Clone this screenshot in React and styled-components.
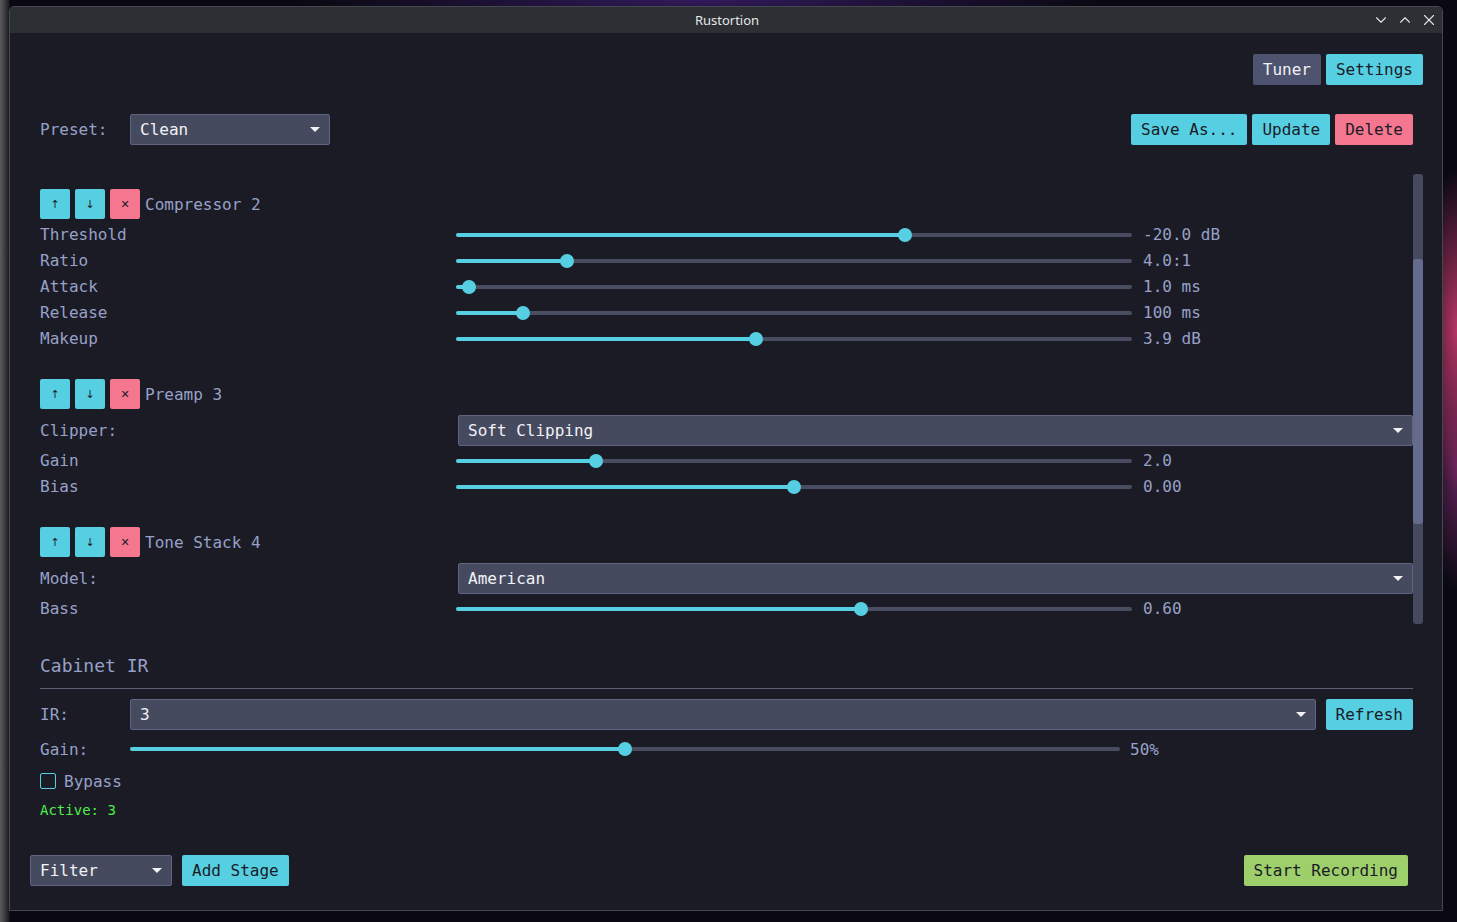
import React from 'react';
import styled, { createGlobalStyle } from 'styled-components';
import { ChevronDown, ChevronUp, X } from 'lucide-react';

const C = {
  bg: '#1b1b26',
  label: '#97a1c7',
  cyan: '#56cfe3',
  red: '#f5768f',
  green: '#9dd06b',
  slate: '#4e5470',
  track: '#494d62',
  pickBg: '#464a5f',
  pickBorder: '#5f6482',
  dark: '#1b1b26',
};

const Global = createGlobalStyle`
  html, body { margin: 0; padding: 0; width: 1457px; height: 922px; overflow: hidden; }
  body { background: #08070e; font-family: "DejaVu Sans Mono", "Liberation Mono", monospace; }
  * { box-sizing: border-box; }
`;

const Desktop = styled.div`
  width: 1457px;
  height: 922px;
  display: flex;
  padding: 6px 14px 11px 9px;
  background:
    radial-gradient(ellipse 40px 160px at 1457px 330px, rgba(214, 62, 118, 0.85), transparent 100%),
    radial-gradient(ellipse 30px 120px at 1457px 470px, rgba(150, 50, 130, 0.6), transparent 100%),
    radial-gradient(ellipse 400px 30px at 700px 0px, rgba(60, 30, 110, 0.8), transparent 100%),
    linear-gradient(90deg, #5d5d60 0px, #3b3b3f 5px, #1c1c20 9px, transparent 10px),
    #0a0912;
`;

const Window = styled.div`
  flex: 1;
  display: flex;
  flex-direction: column;
  background: ${C.bg};
  border: 1px solid #46484e;
  border-radius: 5px 5px 0 0;
  overflow: hidden;
`;

const TitleBar = styled.div`
  height: 26px;
  background: #2c2f34;
  display: grid;
  grid-template-columns: 1fr auto 1fr;
  align-items: center;
  font-family: "Noto Sans", "Open Sans", sans-serif;
  font-size: 13px;
  color: #e6e6e8;
`;

const TitleText = styled.div`
  grid-column: 2;
  padding-left: 2px;
`;

const WinControls = styled.div`
  grid-column: 3;
  justify-self: end;
  display: flex;
  gap: 6px;
  padding-right: 4px;
  color: #e2e2e2;
  svg { display: block; }
`;

const Body = styled.div`
  flex: 1;
  display: flex;
  flex-direction: column;
  padding: 21px 19px 24px 20px;
`;

const TopBar = styled.div`
  display: flex;
  justify-content: flex-end;
  gap: 5px;
`;

const Button = styled.button`
  height: 31px;
  padding: 0 10px;
  border: none;
  border-radius: 2px;
  font-family: "DejaVu Sans Mono", monospace;
  font-size: 16px;
  background: ${p => p.$bg || C.cyan};
  color: ${p => p.$fg || C.dark};
  display: flex;
  align-items: center;
  white-space: nowrap;
`;

const Main = styled.div`
  padding: 0 10px;
  display: flex;
  flex-direction: column;
`;

const PresetRow = styled.div`
  margin-top: 29px;
  display: flex;
  align-items: center;
  height: 31px;
`;

const Label = styled.div`
  width: ${p => p.$w || 'auto'};
  flex: none;
  color: ${C.label};
  font-size: 16px;
  white-space: nowrap;
`;

const Spacer = styled.div`
  flex: 1;
`;

const ButtonGroup = styled.div`
  display: flex;
  gap: 5px;
`;

const PickBox = styled.div`
  height: 31px;
  width: ${p => p.$w || 'auto'};
  flex: ${p => (p.$w ? 'none' : '1')};
  background: ${C.pickBg};
  border: 1px solid ${C.pickBorder};
  border-radius: 2px;
  padding: 0 9px;
  display: flex;
  align-items: center;
  justify-content: space-between;
  color: #f2f2f6;
  font-size: 16px;
`;

const Caret = styled.span`
  width: 0;
  height: 0;
  border-left: 5px solid transparent;
  border-right: 5px solid transparent;
  border-top: 5px solid #f2f2f6;
`;

const ScrollArea = styled.div`
  margin-top: 29px;
  margin-right: -10px;
  height: 450px;
  display: flex;
`;

const ScrollContent = styled.div`
  flex: 1;
  overflow: hidden;
  padding-top: 15px;
  display: flex;
  flex-direction: column;
  gap: 28px;
`;

const ScrollTrack = styled.div`
  width: 10px;
  flex: none;
  background: #454a5e;
  border-radius: 3px;
  padding-top: 85px;
`;

const ScrollThumb = styled.div`
  height: 265px;
  background: #646b8c;
  border-radius: 3px;
`;

const Stage = styled.div`
  display: flex;
  flex-direction: column;
`;

const StageHeader = styled.div`
  height: 30px;
  margin-bottom: 2px;
  display: flex;
  align-items: center;
  gap: 5px;
  flex: none;
`;

const SmallBtn = styled.div`
  width: 30px;
  height: 30px;
  border-radius: 2px;
  background: ${p => p.$bg};
  color: ${C.dark};
  font-family: "DejaVu Sans", sans-serif;
  font-size: 11px;
  display: flex;
  align-items: center;
  justify-content: center;
`;

const StageTitle = styled.div`
  color: ${C.label};
  font-size: 16px;
`;

const SliderRowBox = styled.div`
  height: 26px;
  flex: none;
  display: flex;
  align-items: center;
  padding-top: 1px;
`;

const SliderBox = styled.div`
  position: relative;
  width: ${p => p.$w}px;
  flex: none;
  height: 26px;
  display: flex;
  align-items: center;
`;

const Track = styled.div`
  width: 100%;
  height: 4px;
  border-radius: 2px;
  background: ${C.track};
  overflow: hidden;
`;

const Fill = styled.div`
  height: 100%;
  background: ${C.cyan};
`;

const Thumb = styled.div`
  position: absolute;
  top: 6px;
  width: 14px;
  height: 14px;
  margin-left: -7px;
  border-radius: 50%;
  background: ${C.cyan};
`;

const Value = styled.div`
  margin-left: ${p => p.$gap || 11}px;
  color: ${C.label};
  font-size: 16px;
  white-space: nowrap;
`;

const PickRow = styled.div`
  height: 31px;
  flex: none;
  margin: 4px 0 1px;
  display: flex;
  align-items: center;
`;

const Cabinet = styled.div`
  display: flex;
  flex-direction: column;
`;

const Heading = styled.div`
  margin-top: 31px;
  height: 22px;
  line-height: 22px;
  font-size: 18px;
  color: ${C.label};
`;

const Separator = styled.div`
  margin-top: 11px;
  height: 1px;
  background: #5c5f72;
`;

const IRRow = styled.div`
  margin-top: 10px;
  display: flex;
  align-items: center;
  gap: 10px;
  & > ${Label} { width: 80px; }
`;

const GainRow = styled.div`
  margin-top: 6px;
  height: 26px;
  display: flex;
  align-items: center;
`;

const BypassRow = styled.div`
  margin-top: 9px;
  height: 20px;
  display: flex;
  align-items: center;
  gap: 8px;
`;

const Check = styled.div`
  width: 16px;
  height: 16px;
  border: 1.5px solid ${C.cyan};
  border-radius: 2px;
`;

const Active = styled.div`
  margin-top: 10px;
  height: 18px;
  line-height: 18px;
  font-size: 14px;
  color: #4cef47;
`;

const BottomBar = styled.div`
  margin-top: auto;
  padding-right: 15px;
  display: flex;
  align-items: center;
  gap: 10px;
`;

function Slider({ pct, width = 676 }) {
  return (
    <SliderBox $w={width}>
      <Track>
        <Fill style={{ width: `${pct}%` }} />
      </Track>
      <Thumb style={{ left: `${pct}%` }} />
    </SliderBox>
  );
}

function SliderRow({ label, pct, value }) {
  return (
    <SliderRowBox>
      <Label $w="416px">{label}</Label>
      <Slider pct={pct} />
      <Value>{value}</Value>
    </SliderRowBox>
  );
}

function Pick({ value, width }) {
  return (
    <PickBox $w={width}>
      <span>{value}</span>
      <Caret />
    </PickBox>
  );
}

function Header({ title }) {
  return (
    <StageHeader>
      <SmallBtn $bg={C.cyan}>↑</SmallBtn>
      <SmallBtn $bg={C.cyan}>↓</SmallBtn>
      <SmallBtn $bg={C.red}>✕</SmallBtn>
      <StageTitle>{title}</StageTitle>
    </StageHeader>
  );
}

export default function App() {
  return (
    <>
      <Global />
      <Desktop>
        <Window>
          <TitleBar>
            <TitleText>Rustortion</TitleText>
            <WinControls>
              <ChevronDown size={18} strokeWidth={1.5} />
              <ChevronUp size={18} strokeWidth={1.5} />
              <X size={18} strokeWidth={1.5} />
            </WinControls>
          </TitleBar>
          <Body>
            <TopBar>
              <Button $bg={C.slate} $fg="#f0f0f6">Tuner</Button>
              <Button>Settings</Button>
            </TopBar>
            <Main>
              <PresetRow>
                <Label $w="90px">Preset:</Label>
                <Pick value="Clean" width="200px" />
                <Spacer />
                <ButtonGroup>
                  <Button>Save As...</Button>
                  <Button>Update</Button>
                  <Button $bg={C.red}>Delete</Button>
                </ButtonGroup>
              </PresetRow>

              <ScrollArea>
                <ScrollContent>
                  <Stage>
                    <Header title="Compressor 2" />
                    <SliderRow label="Threshold" pct={66.4} value="-20.0 dB" />
                    <SliderRow label="Ratio" pct={16.4} value="4.0:1" />
                    <SliderRow label="Attack" pct={1.9} value="1.0 ms" />
                    <SliderRow label="Release" pct={9.9} value="100 ms" />
                    <SliderRow label="Makeup" pct={44.4} value="3.9 dB" />
                  </Stage>
                  <Stage>
                    <Header title="Preamp 3" />
                    <PickRow>
                      <Label $w="418px">Clipper:</Label>
                      <Pick value="Soft Clipping" />
                    </PickRow>
                    <SliderRow label="Gain" pct={20.7} value="2.0" />
                    <SliderRow label="Bias" pct={50} value="0.00" />
                  </Stage>
                  <Stage>
                    <Header title="Tone Stack 4" />
                    <PickRow>
                      <Label $w="418px">Model:</Label>
                      <Pick value="American" />
                    </PickRow>
                    <SliderRow label="Bass" pct={59.9} value="0.60" />
                  </Stage>
                </ScrollContent>
                <ScrollTrack>
                  <ScrollThumb />
                </ScrollTrack>
              </ScrollArea>

              <Cabinet>
                <Heading>Cabinet IR</Heading>
                <Separator />
                <IRRow>
                  <Label>IR:</Label>
                  <Pick value="3" />
                  <Button>Refresh</Button>
                </IRRow>
                <GainRow>
                  <Label $w="90px">Gain:</Label>
                  <Slider pct={50} width={990} />
                  <Value $gap={10}>50%</Value>
                </GainRow>
                <BypassRow>
                  <Check />
                  <Label>Bypass</Label>
                </BypassRow>
                <Active>Active: 3</Active>
              </Cabinet>
            </Main>

            <BottomBar>
              <Pick value="Filter" width="142px" />
              <Button>Add Stage</Button>
              <Spacer />
              <Button $bg={C.green}>Start Recording</Button>
            </BottomBar>
          </Body>
        </Window>
      </Desktop>
    </>
  );
}
